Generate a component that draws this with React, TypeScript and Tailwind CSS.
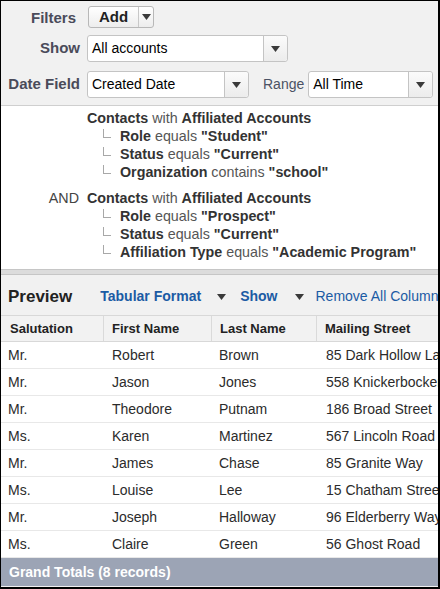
import React from 'react';

type Row = { sal: string; first: string; last: string; street: string };

const rows: Row[] = [
  { sal: 'Mr.', first: 'Robert', last: 'Brown', street: '85 Dark Hollow Lane' },
  { sal: 'Mr.', first: 'Jason', last: 'Jones', street: '558 Knickerbocker Ave' },
  { sal: 'Mr.', first: 'Theodore', last: 'Putnam', street: '186 Broad Street' },
  { sal: 'Ms.', first: 'Karen', last: 'Martinez', street: '567 Lincoln Road' },
  { sal: 'Mr.', first: 'James', last: 'Chase', street: '85 Granite Way' },
  { sal: 'Ms.', first: 'Louise', last: 'Lee', street: '15 Chatham Street' },
  { sal: 'Mr.', first: 'Joseph', last: 'Halloway', street: '96 Elderberry Way' },
  { sal: 'Ms.', first: 'Claire', last: 'Green', street: '56 Ghost Road' },
];

const groups = [
  {
    prefix: '',
    items: [
      { field: 'Role', op: 'equals', value: '"Student"' },
      { field: 'Status', op: 'equals', value: '"Current"' },
      { field: 'Organization', op: 'contains', value: '"school"' },
    ],
  },
  {
    prefix: 'AND',
    items: [
      { field: 'Role', op: 'equals', value: '"Prospect"' },
      { field: 'Status', op: 'equals', value: '"Current"' },
      { field: 'Affiliation Type', op: 'equals', value: '"Academic Program"' },
    ],
  },
];

const Caret = ({ className = '' }: { className?: string }) => (
  <svg width="9" height="6" viewBox="0 0 9 6" className={`shrink-0 ${className}`}>
    <path d="M0 0h9L4.5 6z" fill="#3a3a3a" />
  </svg>
);

const Select = ({ value, width }: { value: string; width: string }) => (
  <div className={`flex h-[27px] ${width} border border-[#c4c4c4] rounded-[3px] bg-white`}>
    <div className="flex-1 flex items-center pl-[4px] text-[14px] text-black truncate">{value}</div>
    <div className="w-[24px] flex items-center justify-center border-l border-[#c4c4c4] bg-gradient-to-b from-[#fbfbfb] to-[#ececec] rounded-r-[3px]">
      <Caret />
    </div>
  </div>
);

const Label = ({ children }: { children: React.ReactNode }) => (
  <div className="w-[79px] text-right text-[15px] font-bold text-[#4a4b5a]">{children}</div>
);

export default function App() {
  return (
    <div
      className="w-[440px] h-[589px] overflow-hidden border-t border-l border-r-2 border-b-2 border-black bg-[#f1f1f1] flex flex-col"
      style={{ fontFamily: '"Liberation Sans", Arial, sans-serif' }}
    >
      {/* report settings */}
      <div className="flex flex-col pt-[5px] pb-[7px] border-b border-[#cfcfcf]">
        <div className="flex items-center gap-[8px] h-[22px]">
          <Label>
            <span className="mr-[4px] relative top-[1px]">Filters</span>
          </Label>
          <div className="flex h-[22px] w-[66px] border border-[#b8b8b8] rounded-[3px] bg-gradient-to-b from-white to-[#ededed]">
            <div className="flex-1 flex items-center justify-center text-[15px] font-bold text-[#222]">Add</div>
            <div className="w-[15px] flex items-center justify-center border-l border-[#c8c8c8]">
              <Caret />
            </div>
          </div>
        </div>
        <div className="flex items-center gap-[7px] mt-[7px]">
          <Label>Show</Label>
          <Select value="All accounts" width="w-[201px]" />
        </div>
        <div className="flex items-center gap-[7px] mt-[9px]">
          <Label>Date Field</Label>
          <Select value="Created Date" width="w-[162px]" />
          <span className="ml-[7px] text-[14px] text-[#4b5264]">Range</span>
          <div className="ml-[-3px]">
            <Select value="All Time" width="w-[125px]" />
          </div>
        </div>
      </div>

      {/* filter criteria */}
      <div className="bg-white pt-[3px] h-[163px] shrink-0 text-[14.3px] leading-[18px] text-[#333]">
        {groups.map((g, gi) => (
          <div key={gi} className={gi > 0 ? 'mt-[8px]' : ''}>
            <div className="flex">
              <span className="w-[86px] pr-[8px] text-right text-[#444]">{g.prefix}</span>
              <span>
                <b>Contacts</b> <span className="text-[#555]">with</span> <b>Affiliated Accounts</b>
              </span>
            </div>
            {g.items.map((it, i) => (
              <div key={i} className="flex items-center">
                <span className="ml-[102px] mr-[9px] mb-[5px] w-[8px] h-[9px] border-l border-b border-[#a8a8a8]" />
                <span>
                  <b>{it.field}</b> <span className="text-[#555]">{it.op}</span> <b>{it.value}</b>
                </span>
              </div>
            ))}
          </div>
        ))}
      </div>

      <div className="h-[6px] shrink-0 border-t border-b border-[#c6c6c6] bg-[#dcdcdc]" />

      {/* preview toolbar */}
      <div className="flex items-center h-[40px] shrink-0 pt-[3px] px-[7px] whitespace-nowrap overflow-hidden">
        <span className="shrink-0 text-[17px] font-bold text-[#222]">Preview</span>
        <span className="shrink-0 ml-[28px] text-[14px] font-bold text-[#1b5ba4]">Tabular Format</span>
        <Caret className="ml-[16px]" />
        <span className="shrink-0 ml-[14px] text-[14px] font-bold text-[#1b5ba4]">Show</span>
        <Caret className="ml-[18px]" />
        <span className="shrink-0 ml-[11px] text-[14px] text-[#1b5ba4]">Remove All Columns</span>
      </div>

      {/* results */}
      <div className="flex-1 flex flex-col">
        <div className="grid grid-cols-[103px_108px_105px_1fr] h-[27px] shrink-0 border-t border-b border-[#d8d8d8] bg-[#f2f2f2] text-[13px] font-bold text-[#222] whitespace-nowrap overflow-hidden">
          <div className="flex items-center pl-[9px] border-r border-[#dadada]">Salutation</div>
          <div className="flex items-center pl-[8px] border-r border-[#dadada]">First Name</div>
          <div className="flex items-center pl-[8px] border-r border-[#dadada]">Last Name</div>
          <div className="flex items-center pl-[8px]">Mailing Street</div>
        </div>
        {rows.map((r, i) => (
          <div
            key={i}
            className="grid grid-cols-[103px_108px_105px_1fr] h-[27px] shrink-0 bg-white border-b border-[#e8e8e8] text-[14px] text-[#2b2b2b] whitespace-nowrap overflow-hidden"
          >
            <div className="flex items-center pl-[7px]">{r.sal}</div>
            <div className="flex items-center pl-[8px]">{r.first}</div>
            <div className="flex items-center pl-[7px]">{r.last}</div>
            <div className="flex items-center pl-[9px]">{r.street}</div>
          </div>
        ))}
        <div className="flex items-center h-[28px] shrink-0 pl-[8px] bg-[#9ca4b5] text-[14px] font-bold text-white">
          Grand Totals (8 records)
        </div>
      </div>
    </div>
  );
}
